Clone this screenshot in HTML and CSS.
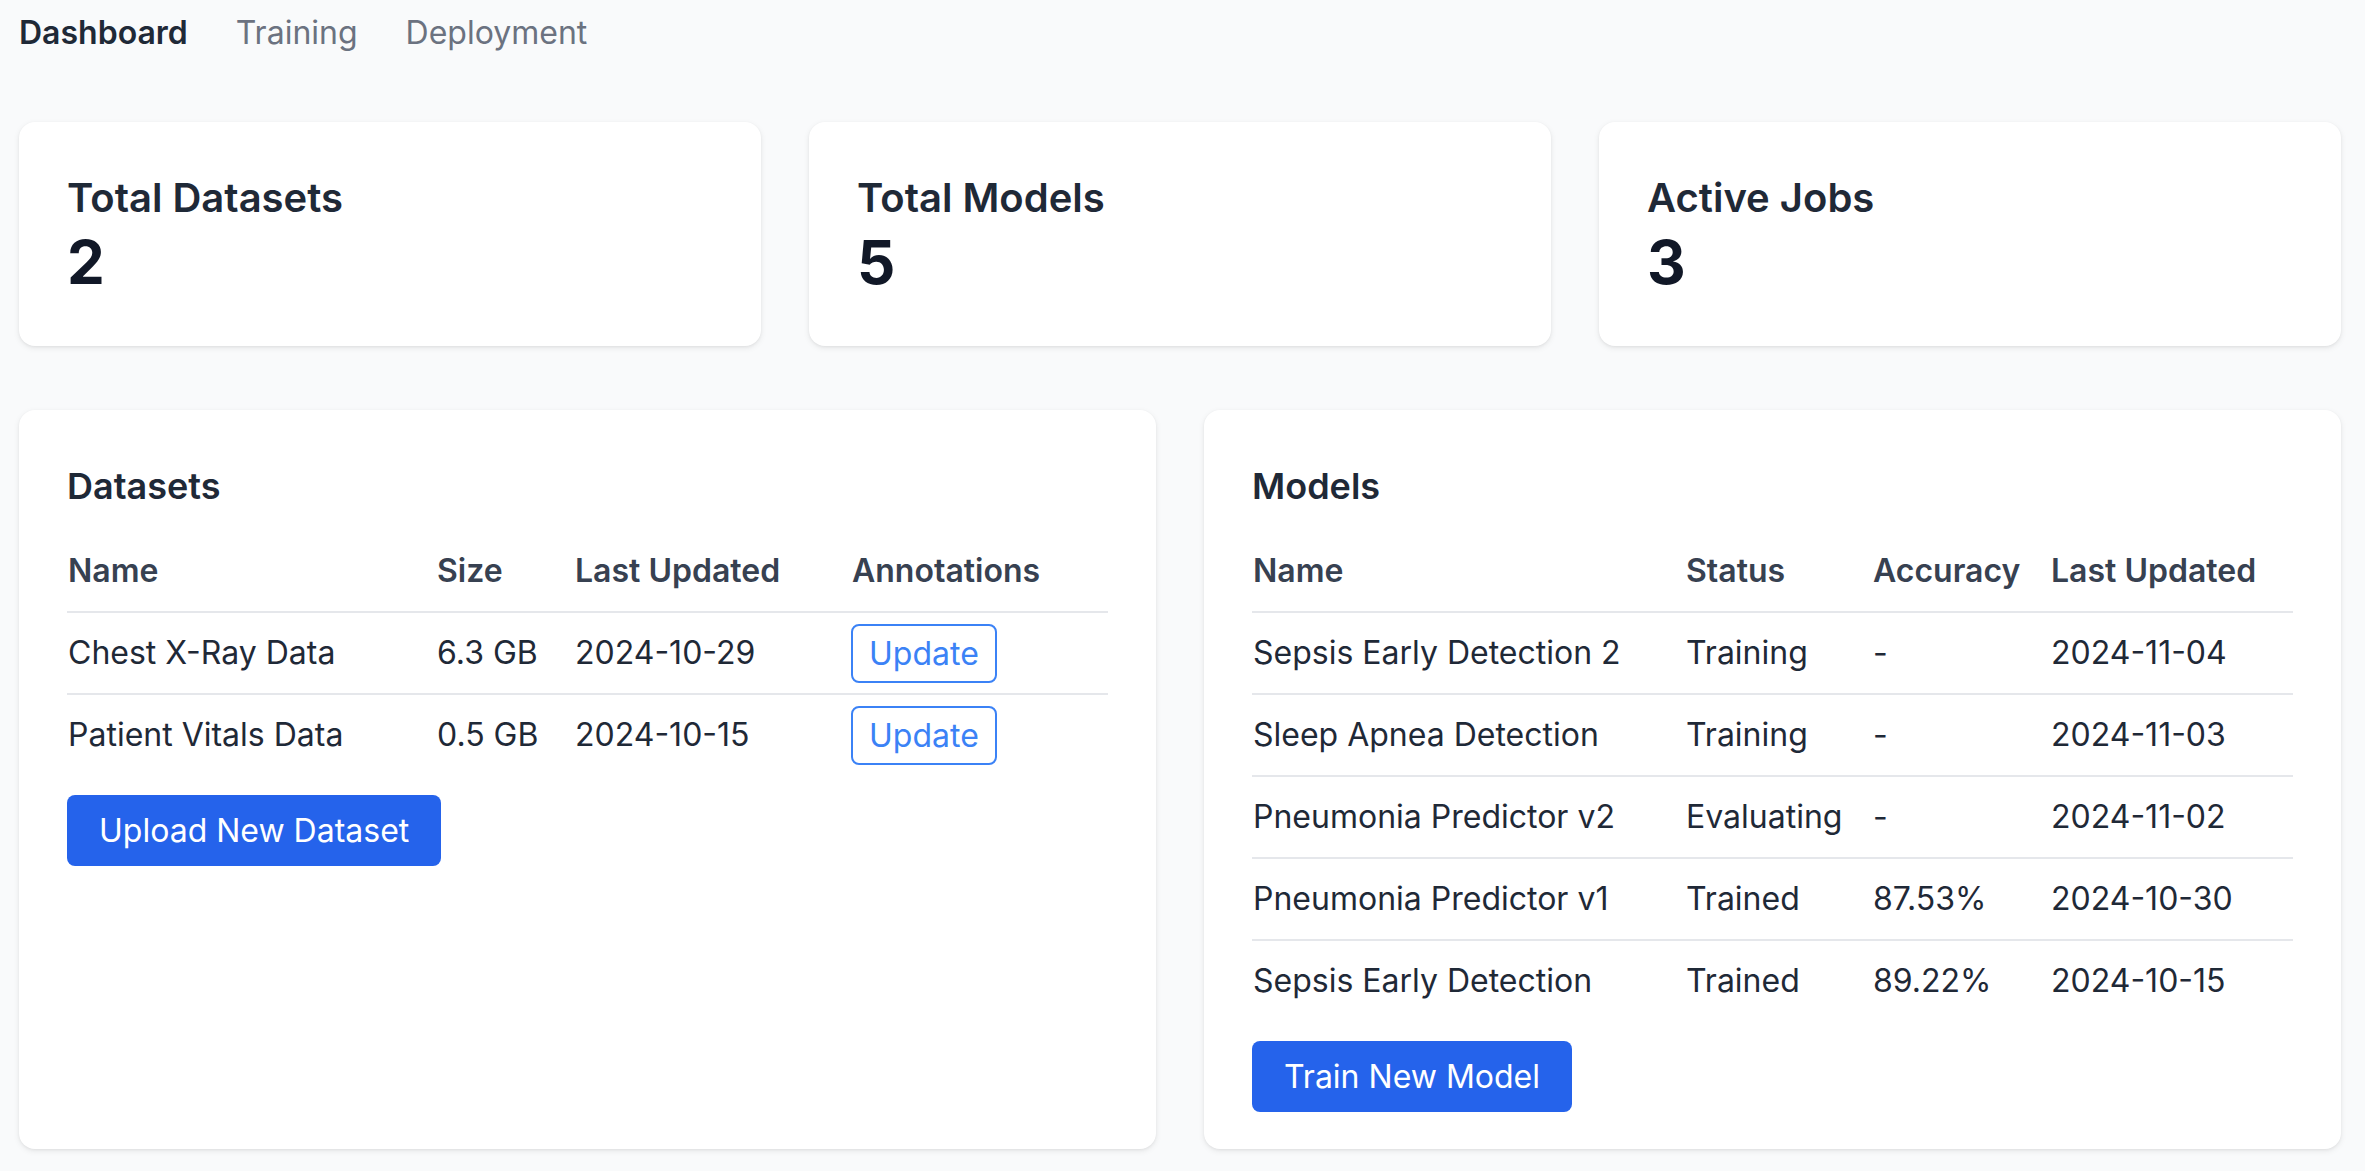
FILE: index.html
```html
<!DOCTYPE html>
<html lang="en">
<head>
<meta charset="utf-8">
<title>Dashboard</title>
<link rel="stylesheet" href="styles.css">
</head>
<body>
<div class="page">
  <nav class="nav">
    <a class="nav-link active">Dashboard</a>
    <a class="nav-link">Training</a>
    <a class="nav-link">Deployment</a>
  </nav>

  <section class="stats">
    <div class="card stat">
      <div class="stat-title">Total Datasets</div>
      <div class="stat-value">2</div>
    </div>
    <div class="card stat">
      <div class="stat-title">Total Models</div>
      <div class="stat-value">5</div>
    </div>
    <div class="card stat">
      <div class="stat-title">Active Jobs</div>
      <div class="stat-value">3</div>
    </div>
  </section>

  <section class="panels">
    <div class="card panel">
      <h2 class="panel-title">Datasets</h2>
      <table class="table">
        <colgroup>
          <col class="c-ds-name"><col class="c-ds-size"><col class="c-ds-date"><col>
        </colgroup>
        <thead>
          <tr><th>Name</th><th>Size</th><th>Last Updated</th><th>Annotations</th></tr>
        </thead>
        <tbody>
          <tr><td>Chest X-Ray Data</td><td>6.3 GB</td><td>2024-10-29</td><td class="btn-cell"><button class="btn-outline">Update</button></td></tr>
          <tr><td>Patient Vitals Data</td><td>0.5 GB</td><td>2024-10-15</td><td class="btn-cell"><button class="btn-outline">Update</button></td></tr>
        </tbody>
      </table>
      <button class="btn-primary">Upload New Dataset</button>
    </div>

    <div class="card panel">
      <h2 class="panel-title">Models</h2>
      <table class="table">
        <colgroup>
          <col class="c-m-name"><col class="c-m-status"><col class="c-m-acc"><col>
        </colgroup>
        <thead>
          <tr><th>Name</th><th>Status</th><th>Accuracy</th><th>Last Updated</th></tr>
        </thead>
        <tbody>
          <tr><td>Sepsis Early Detection 2</td><td>Training</td><td>-</td><td>2024-11-04</td></tr>
          <tr><td>Sleep Apnea Detection</td><td>Training</td><td>-</td><td>2024-11-03</td></tr>
          <tr><td>Pneumonia Predictor v2</td><td>Evaluating</td><td>-</td><td>2024-11-02</td></tr>
          <tr><td>Pneumonia Predictor v1</td><td>Trained</td><td>87.53%</td><td>2024-10-30</td></tr>
          <tr><td>Sepsis Early Detection</td><td>Trained</td><td>89.22%</td><td>2024-10-15</td></tr>
        </tbody>
      </table>
      <button class="btn-primary">Train New Model</button>
    </div>
  </section>
</div>
</body>
</html>
```

FILE: styles.css
```css
* { box-sizing: border-box; }

html, body {
  margin: 0;
  padding: 0;
  background: #f9fafb;
  font-family: Inter, "Noto Sans", "Liberation Sans", sans-serif;
  color: #1f2937;
}

.page {
  height: 100vh;
  padding: 0 24px 22px 19px;
  display: flex;
  flex-direction: column;
}

.nav {
  display: flex;
  gap: 48px;
  padding-top: 9px;
  margin-bottom: 65px;
  font-size: 32px;
  line-height: 48px;
}

.nav-link {
  color: #6b7280;
  font-weight: 400;
}

.nav-link.active {
  color: #1f2937;
  font-weight: 600;
}

.card {
  background: #ffffff;
  border-radius: 16px;
  box-shadow: 0 2px 6px rgba(0, 0, 0, 0.08), 0 1px 3px rgba(0, 0, 0, 0.05);
  padding: 48px;
}

.stats {
  display: grid;
  grid-template-columns: repeat(3, 1fr);
  gap: 48px;
  margin-bottom: 64px;
}

.stat-title {
  font-size: 40px;
  line-height: 56px;
  font-weight: 600;
  color: #1f2937;
}

.stat-value {
  font-size: 60px;
  line-height: 72px;
  font-weight: 700;
  color: #111827;
}

.panels {
  flex: 1;
  min-height: 0;
  display: grid;
  grid-template-columns: 1fr 1fr;
  grid-template-rows: minmax(0, 1fr);
  gap: 48px;
}

.panel {
  min-height: 0;
}

.panel-title {
  margin: 0 0 17px 0;
  font-size: 36px;
  line-height: 56px;
  font-weight: 600;
  color: #1f2937;
}

.table {
  width: 100%;
  border-collapse: collapse;
  table-layout: fixed;
  font-size: 32px;
  line-height: 48px;
}

.c-ds-name { width: 369px; }
.c-ds-size { width: 138px; }
.c-ds-date { width: 277px; }

.c-m-name { width: 433px; }
.c-m-status { width: 187px; }
.c-m-acc { width: 178px; }

.table th {
  text-align: left;
  font-weight: 600;
  color: #374151;
  padding: 16px 0 16px 1px;
  white-space: nowrap;
}

.table td {
  padding: 16px 0 16px 1px;
  color: #1f2937;
  white-space: nowrap;
}

.table thead tr {
  border-bottom: 2px solid #e5e7eb;
}

.table tbody tr {
  border-bottom: 2px solid #e5e7eb;
}

.table tbody tr:last-child {
  border-bottom: none;
}

.table td.btn-cell {
  padding: 0;
}

.btn-outline {
  font-family: inherit;
  font-size: 32px;
  line-height: normal;
  color: #3b82f6;
  background: #ffffff;
  border: 2px solid #3b82f6;
  border-radius: 8px;
  padding: 8px 16px;
  vertical-align: middle;
}

.btn-primary {
  display: block;
  margin-top: 20px;
  font-family: inherit;
  font-size: 32px;
  line-height: normal;
  color: #ffffff;
  background: #2563eb;
  border: none;
  border-radius: 8px;
  padding: 16px 32px;
}
```
